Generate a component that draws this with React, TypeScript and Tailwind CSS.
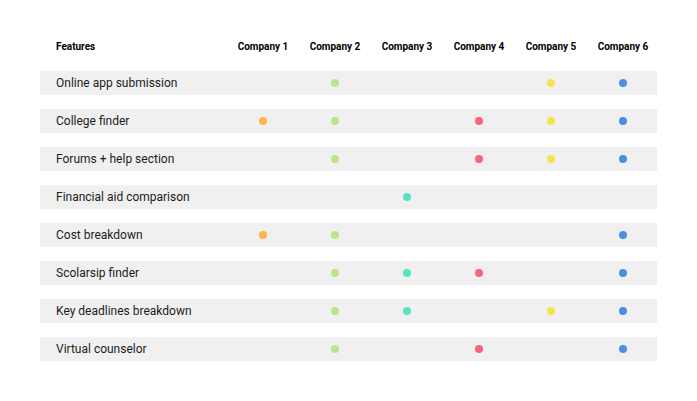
const companies = ["Company 1", "Company 2", "Company 3", "Company 4", "Company 5", "Company 6"];

// dot colours per company column
const dotColors = [
  "bg-[#fdb34f]",
  "bg-[#b9e68a]",
  "bg-[#55e3c4]",
  "bg-[#f6637a]",
  "bg-[#f3e34e]",
  "bg-[#4a90e2]",
];

const features: { name: string; has: number[] }[] = [
  { name: "Online app submission", has: [1, 4, 5] },
  { name: "College finder", has: [0, 1, 3, 4, 5] },
  { name: "Forums + help section", has: [1, 3, 4, 5] },
  { name: "Financial aid comparison", has: [2] },
  { name: "Cost breakdown", has: [0, 1, 5] },
  { name: "Scolarsip finder", has: [1, 2, 3, 5] },
  { name: "Key deadlines breakdown", has: [1, 2, 4, 5] },
  { name: "Virtual counselor", has: [1, 3, 5] },
];

export default function App() {
  return (
    <div className="w-[697px] h-[401px] bg-white pl-[40px] pt-[36px] font-['Roboto',sans-serif] text-[#1c1c1c]">
      <div className="grid grid-cols-[187px_repeat(6,72px)] h-[20px] items-center text-[10px] font-bold text-black">
        <div className="pl-[16px]">Features</div>
        {companies.map((c) => (
          <div key={c} className="text-center">{c}</div>
        ))}
      </div>
      <div className="flex flex-col gap-[14px] mt-[15px]">
        {features.map((f) => (
          <div key={f.name} className="w-[617px] h-[24px] bg-[#f0f0f0] grid grid-cols-[187px_repeat(6,72px)] items-center">
            <div className="pl-[16px] text-[12px]">{f.name}</div>
            {companies.map((c, i) => (
              <div key={c} className="flex justify-center">
                {f.has.includes(i) && <span className={`w-[8px] h-[8px] rounded-full ${dotColors[i]}`} />}
              </div>
            ))}
          </div>
        ))}
      </div>
    </div>
  );
}
